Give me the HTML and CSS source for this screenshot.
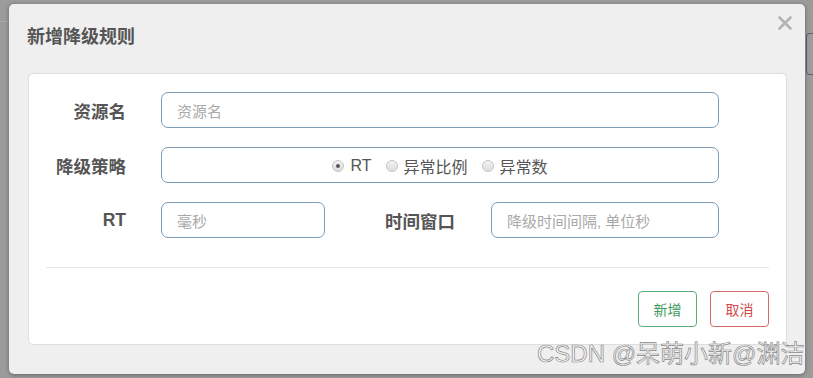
FILE: index.html
```html
<!DOCTYPE html>
<html lang="zh">
<head>
<meta charset="utf-8">
<title>新增降级规则</title>
<link rel="stylesheet" href="styles.css">
</head>
<body>
<div class="page-bg">
  <div class="bg-line"></div>
  <div class="bg-btn"></div>
</div>
<div class="modal">
  <div class="modal-header">
    <h3 class="modal-title">新增降级规则</h3>
    <span class="close">
      <svg width="14" height="14" viewBox="0 0 14 14"><path d="M1.5 1.5 L12.5 12.5 M12.5 1.5 L1.5 12.5" stroke="#b3b3b3" stroke-width="2.6" stroke-linecap="round"/></svg>
    </span>
  </div>
  <div class="panel">
    <div class="form">
      <div class="row">
        <label class="label w-main">资源名</label>
        <div class="input wide"><span class="ph">资源名</span></div>
      </div>
      <div class="row">
        <label class="label w-main">降级策略</label>
        <div class="input wide radios">
          <span class="radio checked"></span><span class="rtext">RT</span>
          <span class="radio"></span><span class="rtext">异常比例</span>
          <span class="radio"></span><span class="rtext">异常数</span>
        </div>
      </div>
      <div class="row">
        <label class="label w-main">RT</label>
        <div class="input short"><span class="ph">毫秒</span></div>
        <label class="label w-second">时间窗口</label>
        <div class="input medium"><span class="ph">降级时间间隔, 单位秒</span></div>
      </div>
    </div>
    <div class="divider"></div>
    <div class="footer">
      <button class="btn btn-ok">新增</button>
      <button class="btn btn-cancel">取消</button>
    </div>
  </div>
</div>
<div class="watermark">CSDN @呆萌小新@渊洁</div>
</body>
</html>
```
FILE: styles.css
```css
html, body {
  margin: 0;
  padding: 0;
}
body {
  width: 813px;
  height: 378px;
  overflow: hidden;
  background: #9b9b9b;
  font-family: "Liberation Sans", "Noto Sans CJK SC", sans-serif;
  position: relative;
}
.page-bg .bg-line {
  position: absolute;
  left: 0;
  top: 21px;
  width: 9px;
  height: 1px;
  background: #acacac;
}
.page-bg .bg-btn {
  position: absolute;
  left: 806px;
  top: 33px;
  width: 20px;
  height: 40px;
  border: 1px solid #58626c;
  border-radius: 3px;
  background: #9d9d9d;
}
.modal {
  position: absolute;
  left: 9px;
  top: 4px;
  width: 796px;
  height: 370px;
  background: #efefef;
  border-radius: 5px;
  box-shadow: 0 1px 4px rgba(0,0,0,0.35);
  box-sizing: border-box;
  padding: 0 18px 0 19px;
}
.modal-header {
  height: 69px;
  display: flex;
  align-items: flex-start;
  justify-content: space-between;
}
.modal-title {
  margin: 22px 0 0 -1px;
  font-size: 18px;
  font-weight: bold;
  color: #555;
  line-height: 22px;
}
.close {
  margin-top: 12px;
  margin-right: -5px;
  display: block;
}
.panel {
  background: #fff;
  border: 1px solid #dedede;
  border-radius: 5px;
  height: 272px;
  box-sizing: border-box;
  padding: 18px 17px 0 17px;
}
.form {
  display: flex;
  flex-direction: column;
  gap: 19px;
}
.row {
  display: flex;
  align-items: center;
  height: 36px;
}
.label {
  font-size: 17.5px;
  font-weight: bold;
  color: #555;
  text-align: right;
  box-sizing: border-box;
}
.w-main {
  width: 80px;
  margin-right: 35px;
}
.w-second {
  width: 130px;
  margin-right: 36px;
}
.input {
  height: 36px;
  box-sizing: border-box;
  border: 1.5px solid #7b9bb6;
  border-radius: 7px;
  display: flex;
  align-items: center;
  padding-left: 15px;
  background: #fff;
}
.wide { width: 558px; }
.short { width: 164px; }
.medium { width: 228px; }
.ph {
  font-size: 15px;
  color: #a9a9a9;
}
.radios {
  justify-content: center;
  padding-left: 0;
  padding-top: 1px;
}
.radio {
  width: 12px;
  height: 12px;
  border-radius: 50%;
  border: 1px solid #c4c4c4;
  background: linear-gradient(#f4f4f4, #dcdcdc);
  box-sizing: border-box;
  margin-right: 6px;
  position: relative;
}
.radio.checked::after {
  content: "";
  position: absolute;
  left: 3px;
  top: 3px;
  width: 4px;
  height: 4px;
  border-radius: 50%;
  background: #555;
}
.rtext {
  font-size: 16px;
  color: #555;
  margin-right: 14px;
}
.rtext:last-child { margin-right: 0; }
.divider {
  height: 1px;
  background: #e6e6e6;
  margin-top: 29px;
}
.footer {
  display: flex;
  justify-content: flex-end;
  gap: 13px;
  margin-top: 23px;
}
.btn {
  width: 59px;
  height: 36px;
  background: #fff;
  border-radius: 4px;
  font-family: "Liberation Sans", "Noto Sans CJK SC", sans-serif;
  font-size: 14px;
  padding: 0;
}
.btn-ok {
  border: 1.5px solid #5aae78;
  color: #3e9a5e;
}
.btn-cancel {
  border: 1.5px solid #d46a6a;
  color: #cf4b4b;
}
.watermark {
  position: absolute;
  left: 537px;
  top: 340px;
  font-size: 24px;
  line-height: 28px;
  color: rgba(255,255,255,0.55);
  -webkit-text-stroke: 0.7px #8a8a8a;
  white-space: nowrap;
  font-family: "Liberation Sans", "Noto Sans CJK SC", sans-serif;
}
```
